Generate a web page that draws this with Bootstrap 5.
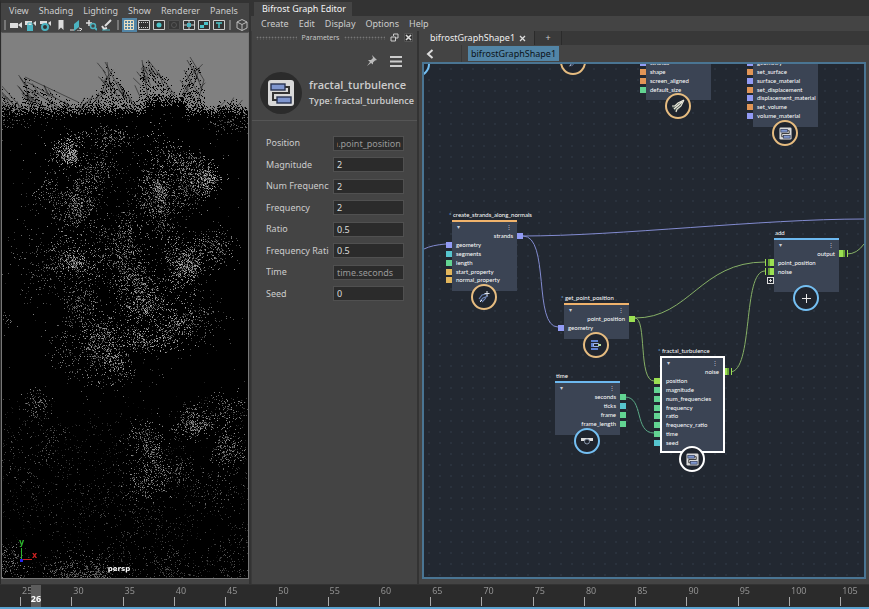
<!DOCTYPE html>
<html lang="en">
<head>
<meta charset="utf-8">
<meta name="viewport" content="width=device-width, initial-scale=1">
<title>Bifrost Graph Editor</title>
<link href="https://cdn.jsdelivr.net/npm/bootstrap@5.3.0/dist/css/bootstrap.min.css" rel="stylesheet">
<style>
body { background: #444; color: #ccc; font: 9px/12px "Noto Sans", "Open Sans", sans-serif; }
button { background: none; border: 0; padding: 0; color: inherit; font: inherit; }
svg { display: block; }
.shrinkable { min-width: 0; min-height: 0; }

/* 3D viewport */
.view-pane { flex: 0 0 251px; border-left: 1px solid #2b2b2b; border-top: 3px solid #333; padding-bottom: 5px; border-right: 2px solid #333; }
.menu-line { height: 15px; gap: 10px; }
.view-pane .menu-line { padding-left: 8px; }
.tool-line { height: 14px; }
.tool-sep { flex: 0 0 8px; }
.tool-sep::before { content: ""; width: 2px; height: 10px; background: #777; }
.tool-btn { flex: 1 1 0; height: 14px; display: flex; align-items: center; justify-content: center; }
.tool-btn.active { background: #5285a6; }
.tool-btn svg { width: 12px; height: 12px; }
.scene { border: 1px solid #777; border-top-color: #555; background: #000; }
.scene canvas { position: absolute; inset: 0; width: 100%; height: 100%; image-rendering: pixelated; }
.camera-name { position: absolute; bottom: 3px; left: 0; right: 12px; text-align: center; color: #fff; font: bold 7px/12px "DejaVu Sans", sans-serif; }
.axis { position: absolute; left: 14px; bottom: 14px; }

/* editor window */
.title-line { height: 16px; background: #333; padding: 2px 0 0 3px; }
.title-tab { background: #444; color: #f4f4f4; padding: 0 6px 0 8px; }
.editor-pane .menu-line { padding-left: 10px; }
.param-pane { flex: 0 0 167px; border-right: 1px solid #333; border-left: 1px solid #3a3a3a; }
.dock-line { height: 13px; padding: 0 4px; gap: 5px; font: 7px/12px "Open Sans", sans-serif; }
.grip { height: 4px; background: radial-gradient(circle, #777 40%, transparent 50%) 0 0 / 3px 3px; }
.pin-line { height: 27px; padding: 0 15px 0 0; gap: 12px; }
.node-mark { width: 42px; height: 42px; background: #2b2b2b; }
.node-head { padding: 0 0 6px 8px; gap: 7px; border-bottom: 1px solid #555; height: 50px; white-space: nowrap; overflow: hidden; }
.node-head h1 { font: 600 11px/16px "Open Sans", sans-serif; margin: 0; }
.node-head p { font: 600 9px/16px "Open Sans", sans-serif; margin: 0; }
.param-form { padding: 11px 13px 0 14px; }
.param-row { height: 22px; }
.param-row:nth-child(even) { height: 21px; }
.param-row label { flex: 0 0 63px; overflow: hidden; white-space: nowrap; }
.param-row input { width: 71px; min-width: 0; height: 15px; background: #2b2b2b; border: 1px solid #505050; border-radius: 0; color: #ddd; padding: 0 2px 0 3px; font: inherit; }
.param-row input.linked { color: #999; }

.graph-pane { padding: 0 3px 5px 3px; border-left: 1px solid #333; }
.tab-line { height: 14px; margin: 0 -3px 0 0; background: #383838; }
.graph-tab { background: #444; color: #eee; padding: 0 8px; gap: 4px; }
.add-tab { width: 28px; background: #3a3a3a; border-right: 1px solid #2b2b2b; border-left: 1px solid #2b2b2b; }
.path-line { height: 17px; }
.back-btn { width: 40px; height: 17px; border-right: 1px solid #383838; padding-left: 4px; }
.path-chip { margin-left: 6px; height: 15px; padding: 0 3px; background: #5285a6; color: #0c1318; }
.stage { border: 2px solid #4a7593; background: radial-gradient(circle at 5px 5px, #2a323d 0 1px, transparent 1px) 0 0 / 11px 11px #222831; }
.wires { position: absolute; left: 0; top: 0; width: 100%; height: 100%; fill: none; stroke-width: 1; }

/* graph nodes */
.gnode { position: absolute; width: 65px; background: #3b4454; border-top: 2px solid #f0b36c; padding-bottom: 7px; color: #fff; font: 6px/9px "Lato", "Open Sans", sans-serif; white-space: nowrap; }
.gnode.cool { border-top-color: #6db9f0; }
.gnode.chosen { border: 2px solid #fff; padding-bottom: 5px; }
.gnode h2 { position: absolute; bottom: 100%; left: 1px; margin: 0 0 3px; font: inherit; }
.gnode.chosen h2 { left: 0; }
.gnode h2.starred::before { content: "*"; color: #8ecbff; position: absolute; left: -4px; }
.node-bar { height: 9px; padding: 0 5px; color: #c8ced8; font-size: 6px; }
.ports { list-style: none; margin: 0; padding: 0; }
.ports li { position: relative; height: 9px; padding: 0 4px; }
.ports li:nth-child(4n) { height: 8px; }
.ports.outs { text-align: right; }
.ports.outs li:nth-child(4n) { height: 9px; }
.ports li::before { content: ""; position: absolute; top: 2px; left: -6px; width: 6px; height: 6px; background: var(--port, #62d492); }
.ports.outs li::before { left: auto; right: -6px; }
.chosen .ports li::before { left: -8px; }
.chosen .ports.outs li::before { left: auto; right: -8px; }
.p-blue { --port: #929bf5; }
.p-teal { --port: #56c5cf; }
.p-orange { --port: #e29556; }
.p-gold { --port: #e2b65c; }
.p-lime { --port: #9be052; }
.ports li.p-list::before { width: 9px; left: -9px; background: linear-gradient(90deg, #9be052 1px, #222831 1px 3px, #6aa637 3px 5px, #9be052 5px); top: 1px; height: 7px; }
.ports.outs li.p-list::before { left: auto; right: -9px; background: linear-gradient(270deg, #9be052 1px, #222831 1px 3px, #6aa637 3px 5px, #9be052 5px); }
.chosen .ports.outs li.p-list::before { right: -9px; width: 7px; }
.port-add { position: absolute; left: -7px; top: 1px; width: 7px; height: 7px; border: 1px solid #ddd; }
.port-add svg { width: 5px; height: 5px; }
.ports li.p-none::before { display: none; }
.emblem { position: absolute; width: 26px; height: 26px; left: 19px; bottom: -19px; border: 2px solid #e6bc80; border-radius: 50%; background: #20252e; display: flex; align-items: center; justify-content: center; }
.cool .emblem, .emblem.cool-ring { border-color: #74bff2; }
.chosen .emblem { border-color: #fff; left: 17px; bottom: -21px; }
.n-strands { left: 28px; top: 156px; }
.n-getpos { left: 140px; top: 239px; }
.n-time { left: 131px; top: 317px; }
.n-fractal { left: 236px; top: 292px; }
.n-add { left: 350px; top: 174px; }
.n-shape { left: 222px; top: -8px; }
.n-material { left: 329px; top: -8px; }
.e-top { left: 136px; top: -15px; }
.e-side { left: -20px; top: -13px; }

/* time slider */
.time-line { height: 25px; background: #2b2b2b; border-top: 1px solid #333; border-bottom: 2px solid #5ba3d0; padding-left: 20px; color: #909090; }
.frame-cell { flex: 0 0 5.9vw; height: 22px; padding-left: 2px; line-height: 12px; position: relative; }
.frame-cell::before { content: ""; position: absolute; left: 0; bottom: 1px; width: 1px; height: 9px; background: #aaa; }
.now { position: absolute; left: 31px; top: 0; bottom: 0; width: 10px; background: #5c5c5c; color: #fff; font-weight: bold; padding-top: 8px; text-align: center; }
.now span { margin: 0 -3px; }
</style>
<script src="https://cdn.jsdelivr.net/npm/bootstrap@5.3.0/dist/js/bootstrap.bundle.min.js"></script>
</head>
<body class="vh-100 d-flex flex-column overflow-hidden">

<svg class="d-none" xmlns="http://www.w3.org/2000/svg">
  <symbol id="compound" viewBox="0 0 28 28">
    <rect x="1" y="1" width="26" height="26" rx="3" fill="#d8d8d8"/>
    <path d="M18 8h4v6H6v7h4" fill="none" stroke="#333" stroke-width="2"/>
    <rect x="4" y="5" width="14" height="6" fill="#7f96cf" stroke="#283250" stroke-width="1.4"/>
    <rect x="10" y="18" width="14" height="6" fill="#7f96cf" stroke="#283250" stroke-width="1.4"/>
  </symbol>
  <symbol id="strand" viewBox="0 0 14 14">
    <path d="M2 9l3-4 4-1M3 11l3-3 5-2M5 12l3-3 2-3" fill="none" stroke="#6f86b8" stroke-width="1.1"/>
    <path d="M3 12l2-2M10 1v5M7.500 3.500h5" fill="none" stroke="#dfe5ef" stroke-width="1"/>
  </symbol>
  <symbol id="feather" viewBox="0 0 14 14">
    <path d="M1 8l5-4 7-3-3 7-5 5z" fill="#4a5650"/>
    <path d="M13 1L7 4 4 7H1M13 1l-3 6-4 3-1 3M11 3L3 10M8 6L4 9" fill="none" stroke="#ece8dc" stroke-width="1.1"/>
  </symbol>
</svg>

<main class="shrinkable d-flex flex-grow-1">

  <section class="view-pane d-flex flex-column" aria-label="Viewport">
    <nav class="menu-line d-flex align-items-center">
      <button>View</button><button>Shading</button><button>Lighting</button><button>Show</button><button>Renderer</button><button>Panels</button>
    </nav>
    <div class="tool-line d-flex align-items-center">
      <span class="tool-sep d-flex justify-content-center"></span>
      <button class="tool-btn" aria-label="Select camera"><svg viewBox="0 0 12 12"><path d="M0 4h8v5H0zM8 6l4-3v6z" fill="#ddd"/></svg></button>
      <button class="tool-btn" aria-label="Lock camera"><svg viewBox="0 0 12 12"><path d="M0 2h7v4H0zM8 4l3-2v5z" fill="#ddd"/><path d="M2 6h6v6H2z" fill="#4bb3c0"/><path d="M3 6V4h4v2" fill="none" stroke="#4bb3c0"/></svg></button>
      <button class="tool-btn" aria-label="Camera attributes"><svg viewBox="0 0 12 12"><path d="M0 2h7v3H0zM8 4l3-2v5z" fill="#ddd"/><circle cx="5" cy="8" r="3" fill="#333" stroke="#4bb3c0" stroke-width="2"/></svg></button>
      <button class="tool-btn" aria-label="Bookmarks"><svg viewBox="0 0 12 12"><path d="M3.500 1h5v10L6 8.500 3.500 11z" fill="#ddd"/></svg></button>
      <button class="tool-btn" aria-label="Image plane"><svg viewBox="0 0 12 12"><path d="M4 5l5-4v7l-5 4z" fill="#4bb3c0"/><path d="M0 11h4M9 9l3 1-2 2H7" fill="none" stroke="#ddd"/></svg></button>
      <button class="tool-btn" aria-label="Pan and zoom"><svg viewBox="0 0 12 12"><path d="M4 1v6M1 4h6" stroke="#ddd" stroke-width="1.500"/><circle cx="8" cy="7" r="2.500" fill="#444" stroke="#4bb3c0" stroke-width="1.500"/><path d="M10 9l2 2" stroke="#4bb3c0" stroke-width="2"/></svg></button>
      <button class="tool-btn" aria-label="Grease pencil"><svg viewBox="0 0 12 12"><path d="M11 1L5 7M2 7l2 3 3-1" stroke="#ddd" stroke-width="2" fill="none"/><path d="M2 11h8" stroke="#4bb3c0"/></svg></button>
      <span class="tool-sep d-flex justify-content-center"></span>
      <button class="tool-btn active" aria-label="Grid"><svg viewBox="0 0 12 12"><path d="M1.500 1.500h9v9h-9zM4.500 1v10M7.500 1v10M1 4.500h10M1 7.500h10" fill="none" stroke="#eadfc0"/></svg></button>
      <button class="tool-btn" aria-label="Film gate"><svg viewBox="0 0 12 12"><path d="M.5 1.500h11v9H.5z" fill="#333" stroke="#ccc"/><path d="M1 3.500h10M1 8.500h10" stroke="#ccc" stroke-dasharray="1 1"/></svg></button>
      <button class="tool-btn" aria-label="Resolution gate"><svg viewBox="0 0 12 12"><path d="M.5 1.500h11v9H.5z" fill="#333" stroke="#ccc"/><circle cx="6" cy="6" r="2.500" fill="#4bc3c9"/></svg></button>
      <button class="tool-btn" aria-label="Gate mask"><svg viewBox="0 0 12 12"><path d="M.5 1.500h11v9H.5z" fill="#383838" stroke="#4f4f4f"/><circle cx="6" cy="6" r="2.500" fill="none" stroke="#555"/></svg></button>
      <button class="tool-btn" aria-label="Field chart"><svg viewBox="0 0 12 12"><path d="M.5 1.500h11v9H.5z" fill="#333" stroke="#ccc"/><path d="M6 2v8M1 6h10" stroke="#ccc"/><path d="M4 4h4v4H4z" fill="#4bb3c0"/></svg></button>
      <button class="tool-btn" aria-label="Safe action"><svg viewBox="0 0 12 12"><path d="M.5 1.500h11v9H.5z" fill="#333" stroke="#ccc"/><path d="M2 6h4v3H2zM6 3h4v3H6z" fill="#4bc3c9"/></svg></button>
      <button class="tool-btn" aria-label="Safe title"><svg viewBox="0 0 12 12"><path d="M.5 1.500h11v9H.5z" fill="#333" stroke="#ccc"/><path d="M3 4h6M6 4v5" stroke="#4bc3c9" stroke-width="1.500"/></svg></button>
      <span class="tool-sep d-flex justify-content-center"></span>
      <button class="tool-btn" aria-label="Wireframe"><svg viewBox="0 0 12 12"><path d="M6 .5l5 2.500v6L6 11.500 1 9V3zM1 3l5 2.500L11 3M6 5.500v6" fill="none" stroke="#bbb"/></svg></button>
    </div>
    <div class="scene position-relative flex-grow-1">
      <canvas id="cloud" width="246" height="545"></canvas>
      <svg class="axis" width="22" height="24" viewBox="0 0 22 24" font-family="DejaVu Sans, sans-serif" font-size="8" font-weight="bold">
        <path d="M5.500 8v11" stroke="#2db52d"/><path d="M6 19.500h10" stroke="#c22"/><path d="M4 19h3v3H4z" fill="#22e"/>
        <text x="3" y="5" fill="#2db52d">y</text><text x="16" y="18" fill="#c22">x</text>
      </svg>
      <div class="camera-name">persp</div>
    </div>
  </section>

  <section class="editor-pane shrinkable d-flex flex-column flex-grow-1">
    <header class="title-line d-flex"><div class="title-tab d-flex align-items-center">Bifrost Graph Editor</div></header>
    <nav class="menu-line d-flex align-items-center">
      <button>Create</button><button>Edit</button><button>Display</button><button>Options</button><button>Help</button>
    </nav>
    <div class="shrinkable d-flex flex-grow-1">

      <aside class="param-pane" aria-label="Parameters">
        <div class="dock-line d-flex align-items-center">
          <span class="grip flex-grow-1"></span><span>Parameters</span><span class="grip flex-grow-1"></span>
          <button aria-label="Float"><svg width="9" height="9" viewBox="0 0 9 9"><path d="M3.500 3V1h4.500v4H6M1 4h4.500v4H1z" fill="none" stroke="#ccc"/></svg></button>
          <button aria-label="Close"><svg width="9" height="9" viewBox="0 0 9 9"><path d="M.5.5h8v8h-8z" fill="#333" stroke="#555"/><path d="M2 2l5 5M7 2L2 7" stroke="#ddd" stroke-width="1.500"/></svg></button>
        </div>
        <div class="pin-line d-flex align-items-end justify-content-end">
          <button aria-label="Pin"><svg width="12" height="20" viewBox="0 0 12 20"><path d="M6 4l5 5-2 .5-2 2 0 2L5 12l-4 3 3-4-2-2 3 0 2-2z" fill="#bbb"/></svg></button>
          <button aria-label="Parameter menu"><svg width="12" height="20" viewBox="0 0 12 20"><path d="M0 6h12M0 10.500h12M0 15h12" stroke="#ccc" stroke-width="2"/></svg></button>
        </div>
        <div class="node-head d-flex align-items-center">
          <span class="node-mark rounded-circle d-flex align-items-center justify-content-center flex-shrink-0"><svg width="28" height="28"><use href="#compound"/></svg></span>
          <div><h1>fractal_turbulence</h1><p>Type: fractal_turbulence</p></div>
        </div>
        <form class="param-form">
          <div class="param-row d-flex align-items-center justify-content-between"><label for="f1">Position</label><input id="f1" class="linked" value="get_point_position.point_position" readonly></div>
          <div class="param-row d-flex align-items-center justify-content-between"><label for="f2">Magnitude</label><input id="f2" value="2"></div>
          <div class="param-row d-flex align-items-center justify-content-between"><label for="f3">Num Frequencies</label><input id="f3" value="2"></div>
          <div class="param-row d-flex align-items-center justify-content-between"><label for="f4">Frequency</label><input id="f4" value="2"></div>
          <div class="param-row d-flex align-items-center justify-content-between"><label for="f5">Ratio</label><input id="f5" value="0.5"></div>
          <div class="param-row d-flex align-items-center justify-content-between"><label for="f6">Frequency Ratio</label><input id="f6" value="0.5"></div>
          <div class="param-row d-flex align-items-center justify-content-between"><label for="f7">Time</label><input id="f7" class="linked" value="time.seconds" readonly></div>
          <div class="param-row d-flex align-items-center justify-content-between"><label for="f8">Seed</label><input id="f8" value="0"></div>
        </form>
      </aside>

      <section class="graph-pane shrinkable d-flex flex-column flex-grow-1" aria-label="Graph">
        <div class="tab-line d-flex">
          <button class="graph-tab d-flex align-items-center">bifrostGraphShape1 <svg width="7" height="7" viewBox="0 0 7 7"><path d="M1 1l5 5M6 1L1 6" stroke="#ddd" stroke-width="1.300"/></svg></button>
          <button class="add-tab">+</button>
        </div>
        <div class="path-line d-flex align-items-center">
          <button class="back-btn" aria-label="Back"><svg width="8" height="10" viewBox="0 0 8 10"><path d="M6.500 1L2 5l4.500 4" fill="none" stroke="#ddd" stroke-width="2"/></svg></button>
          <button class="path-chip">bifrostGraphShape1</button>
        </div>
        <div class="stage position-relative overflow-hidden flex-grow-1">
          <svg class="wires"><g transform="translate(-424 -64)">
            <g stroke="#828bd0">
              <path d="M522 236C620 236 760 219 864 219"/><path d="M523 236C550 236 533 327 558 327"/><path d="M424 249Q432 245 446 244"/>
            </g>
            <g stroke="#86b066">
              <path d="M635 318C690 318 700 262 765 262"/><path d="M635 318C647 318 638 381 654 381"/><path d="M730 372C754 372 742 271 765 271"/><path d="M847 254Q857 254 864 244"/>
            </g>
            <path stroke="#5aa886" d="M625 397C644 397 634 433 654 433"/>
          </g></svg>

          <span class="emblem e-top"><svg width="12" height="12"><use href="#strand"/></svg></span>
          <span class="emblem cool-ring e-side"></span>

          <article class="gnode n-shape">
            <ul class="ports"><li class="p-blue">strands</li><li class="p-orange">shape</li><li class="p-orange">screen_aligned</li><li>default_size</li></ul>
            <span class="emblem"><svg width="14" height="14"><use href="#feather"/></svg></span>
          </article>
          <article class="gnode n-material">
            <ul class="ports"><li class="p-blue">geometry</li><li class="p-orange">set_surface</li><li class="p-blue">surface_material</li><li class="p-orange">set_displacement</li><li class="p-blue">displacement_material</li><li class="p-orange">set_volume</li><li class="p-blue">volume_material</li></ul>
            <span class="emblem"><svg width="13" height="13"><use href="#compound"/></svg></span>
          </article>
          <article class="gnode n-strands">
            <h2 class="starred">create_strands_along_normals</h2>
            <div class="node-bar d-flex justify-content-between"><span>▾</span><span>⋮</span></div>
            <ul class="ports outs"><li class="p-blue">strands</li></ul>
            <ul class="ports"><li class="p-blue">geometry</li><li class="p-teal">segments</li><li>length</li><li class="p-gold">start_property</li><li class="p-gold">normal_property</li></ul>
            <span class="emblem"><svg width="14" height="14"><use href="#strand"/></svg></span>
          </article>
          <article class="gnode n-getpos">
            <h2 class="starred">get_point_position</h2>
            <div class="node-bar d-flex justify-content-between"><span>▾</span><span>⋮</span></div>
            <ul class="ports outs"><li class="p-lime">point_position</li></ul>
            <ul class="ports"><li class="p-blue">geometry</li></ul>
            <span class="emblem"><svg width="12" height="12" viewBox="0 0 12 12"><path d="M1 1h7v10H1z" fill="#5f82cf"/><path d="M1 3.500h7M1 8.500h7" stroke="#20252e"/><path d="M3.500 4.500h5v3h-5z" fill="#20252e" stroke="#9db4e8"/><path d="M8 6h3" stroke="#b9e0a0" stroke-width="2"/></svg></span>
          </article>
          <article class="gnode cool n-time">
            <h2>time</h2>
            <div class="node-bar d-flex justify-content-between"><span>▾</span><span>⋮</span></div>
            <ul class="ports outs"><li>seconds</li><li class="p-teal">ticks</li><li>frame</li><li>frame_length</li></ul>
            <span class="emblem"><svg width="14" height="10" viewBox="0 0 14 10"><path d="M1 2h12v3H1z" fill="#ddd"/><circle cx="7" cy="5.500" r="2.500" fill="#20252e" stroke="#8b98ad"/></svg></span>
          </article>
          <article class="gnode chosen n-fractal">
            <h2 class="starred">fractal_turbulence</h2>
            <div class="node-bar d-flex justify-content-between"><span>▾</span><span>⋮</span></div>
            <ul class="ports outs"><li class="p-list">noise</li></ul>
            <ul class="ports"><li class="p-lime">position</li><li>magnitude</li><li>num_frequencies</li><li>frequency</li><li>ratio</li><li>frequency_ratio</li><li>time</li><li class="p-teal">seed</li></ul>
            <span class="emblem"><svg width="13" height="13"><use href="#compound"/></svg></span>
          </article>
          <article class="gnode cool n-add">
            <h2>add</h2>
            <div class="node-bar d-flex justify-content-between"><span>▾</span><span>⋮</span></div>
            <ul class="ports outs"><li class="p-list">output</li></ul>
            <ul class="ports"><li class="p-list">point_position</li><li class="p-list">noise</li><li class="p-none"><button class="port-add" aria-label="Add port"><svg viewBox="0 0 5 5"><path d="M2.500 1v3M1 2.500h3" stroke="#ddd"/></svg></button></li></ul>
            <span class="emblem"><svg width="9" height="9" viewBox="0 0 9 9"><path d="M4.500 0v9M0 4.500h9" stroke="#e8e8e8"/></svg></span>
          </article>
        </div>
      </section>
    </div>
  </section>
</main>

<footer class="time-line d-flex position-relative overflow-hidden flex-shrink-0">
  <span class="frame-cell">25</span><span class="frame-cell">30</span><span class="frame-cell">35</span><span class="frame-cell">40</span><span class="frame-cell">45</span><span class="frame-cell">50</span><span class="frame-cell">55</span><span class="frame-cell">60</span><span class="frame-cell">65</span><span class="frame-cell">70</span><span class="frame-cell">75</span><span class="frame-cell">80</span><span class="frame-cell">85</span><span class="frame-cell">90</span><span class="frame-cell">95</span><span class="frame-cell">100</span><span class="frame-cell">105</span>
  <output class="now"><span>26</span></output>
</footer>

<script>
// A linked input shows the end of its source path.
document.getElementById('f1').scrollLeft = 1000;

// Point cloud of fur strands: black silhouette on grey, lit by grey specks.
(function () {
  var c = document.getElementById('cloud').getContext('2d');
  var seed = 7;
  function rnd() { seed = (seed * 1664525 + 1013904223) % 4294967296; return seed / 4294967296; }
  function gauss() { return rnd() + rnd() + rnd() + rnd() - 2; }
  c.fillStyle = '#808080'; c.fillRect(0, 0, 246, 545);
  c.translate(-2, -33);

  // upper edge of the fur, as x,y pairs
  var edge = [[0,84],[12,95],[20,103],[24,76],[40,82],[60,91],[76,102],[88,94],[98,88],[105,62],[113,70],[125,84],[138,98],[141,60],[150,60],[165,73],[177,90],[190,57],[198,64],[204,80],[202,103],[222,100],[233,96],[249,106]];
  function top(x) {
    for (var i = 1; i < edge.length; i++) if (x <= edge[i][0]) {
      var a = edge[i - 1], b = edge[i];
      return a[1] + (b[1] - a[1]) * (x - a[0]) / (b[0] - a[0]);
    }
    return 106;
  }
  c.fillStyle = '#000';
  c.fillRect(0, 124, 250, 460);
  for (var x = 2; x < 249; x++) for (var y = 50; y < 124; y++) {
    var t = top(x) + rnd() * 8; if (y < t) continue;
    var core = x > 145 && x < 185 ? 10 : 0;
    var d = (y - t) / (124 - t), p = 0.03 + d * 0.25 + Math.max(0, y - 102 + core) / 20;
    var slope = (x > 180 && x < 207) ? 1.6 * x + y : (x < 80 ? y - 0.4 * x : y - 1.3 * x);
    if (((slope % 4) + 4) % 4 < 1.2) p += 0.3;
    if (rnd() < p) c.fillRect(x, y, 1, 1);
  }
  c.strokeStyle = 'rgba(0,0,0,.65)'; c.lineWidth = 0.7;
  function hair(x1, y1, x2, y2) { c.beginPath(); c.moveTo(x1, y1); c.lineTo(x2, y2); c.stroke(); }
  [[25,77,78,102],[27,82,70,106],[28,88,60,108],[25,78,30,112],[105,62,125,100],[103,70,120,100],[107,62,112,98],[142,60,150,110],[148,60,175,95],[190,57,204,80],[193,66,202,90],[204,80,196,108],[187,60,200,82],[184,70,200,96],[180,80,194,100],[0,84,25,112],[0,90,20,112]].forEach(function (l) { hair(l[0], l[1], l[2], l[3]); });
  for (var i = 0; i < 130; i++) {
    var hx = rnd() * 248, hy = top(hx) + 8 + rnd() * 20, lean = hx > 180 || (hx > 75 && hx < 105) ? 1 : -1;
    hair(hx, hy, hx + lean * (3 + rnd() * 6), hy - 5 - rnd() * 7);
  }

  function speck(x, y, lo, hi) {
    if (x < 2 || x > 248 || y < 106 || y > 578) return;
    // the dark hollow round the face, with an uneven rim
    var a = Math.atan2(y - 254, x - 124), wob = 0.05 * Math.sin(a * 5 + 1) + 0.04 * Math.sin(a * 9);
    var r = Math.hypot((x - 124) / 108, (y - 254) / 136) + wob + (rnd() - 0.5) * 0.12;
    if (r > 1 && r < 1.22 && y > 124 && y < 425 && rnd() < 0.85) return;
    // darker furrows inside the fur
    var f = Math.sin(x / 9 + Math.sin(y / 17) * 2) + Math.sin(y / 13 + Math.sin(x / 15) * 2);
    if (f < -0.5 && rnd() < 0.6) return;
    var g = Math.round(lo + rnd() * (hi - lo));
    c.fillStyle = 'rgb(' + g + ',' + g + ',' + g + ')';
    c.fillRect(Math.round(x), Math.round(y), 1, 1);
  }
  // clusters: centre x,y, spread x,y, count, peak grey
  [[64,149,16,13,330,190],[70,156,8,8,120,200],[105,137,36,9,230,150],[95,166,18,20,190,140],[160,178,16,38,460,170],[161,186,7,10,120,190],
   [190,165,32,24,460,160],[209,181,14,13,280,190],[180,192,34,24,260,140],[55,198,32,30,330,140],[79,208,14,28,320,160],
   [75,258,18,20,280,170],[76,260,9,9,150,190],[45,270,32,34,240,120],[124,252,26,36,500,160],[155,216,18,18,140,140],[182,262,20,26,440,170],
   [188,266,10,10,130,190],[215,250,22,20,260,150],[140,300,18,20,380,170],[125,280,20,16,240,150],[168,320,26,20,460,180],[148,338,22,12,280,180],
   [97,330,16,24,330,170],[111,362,20,24,380,170],[75,350,32,30,280,130],[120,385,34,12,90,110],[38,402,14,14,110,140],[6,315,8,14,60,130],
   [80,302,18,18,160,130],[200,320,34,24,150,110],[145,448,18,22,340,150],[151,480,20,16,360,150],[202,425,22,10,260,160],[227,448,14,14,190,150],
   [186,416,14,22,130,140],[230,405,18,16,150,140],[35,450,34,34,200,100],[183,470,16,14,90,110],[215,490,24,20,90,110],[90,500,60,34,160,80],
   [80,572,26,18,520,115],[86,580,18,10,400,120],[165,570,40,20,240,90],[235,560,20,30,130,90],[8,562,16,16,140,130],[140,530,50,40,220,75],
   [15,122,34,10,130,100],[225,123,40,8,150,110],[130,205,60,40,200,100]].forEach(function (k) {
    for (var i = 0; i < k[4] * 1.15; i++) speck(k[0] + gauss() * k[2], k[1] + gauss() * k[3], 45, k[5]);
  });
  for (i = 0; i < 1200; i++) speck(125 + gauss() * 95, 240 + gauss() * 125, 25, 85);
  for (i = 0; i < 1800; i++) speck(rnd() * 248, 395 + rnd() * 184, 12, 55);
})();
</script>
</body>
</html>
